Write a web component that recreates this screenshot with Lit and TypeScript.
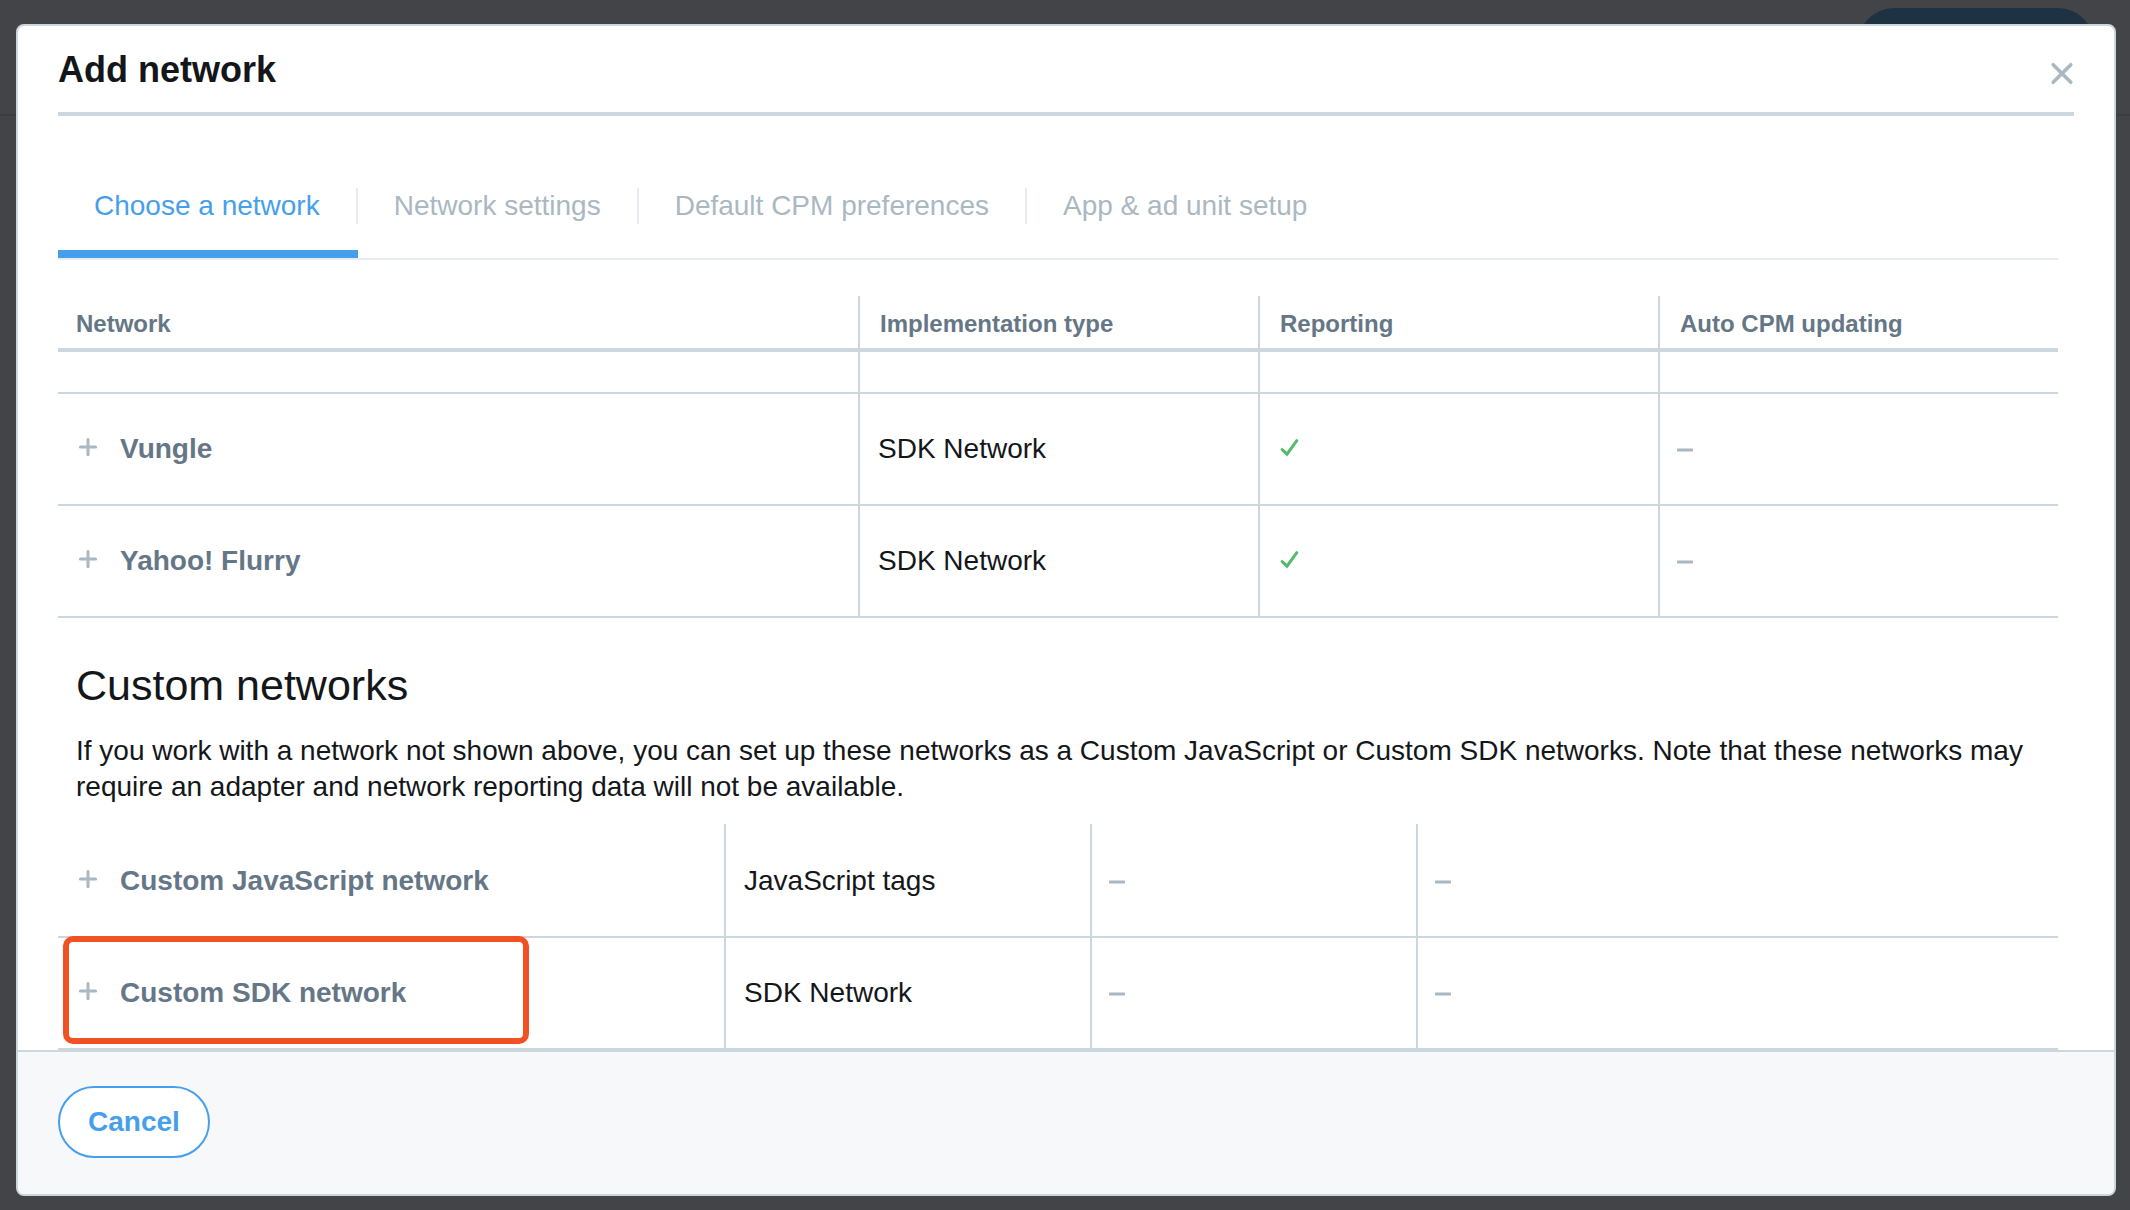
import { LitElement, html, css, nothing } from "lit";
import { customElement, state } from "lit/decorators.js";

interface Network {
  name: string;
  type: string;
  reporting: boolean;
  autoCpm: boolean;
  highlighted?: boolean;
}

const TABS = [
  "Choose a network",
  "Network settings",
  "Default CPM preferences",
  "App & ad unit setup",
];

const COLUMNS = ["Network", "Implementation type", "Reporting", "Auto CPM updating"];

const NETWORKS: Network[] = [
  { name: "Vungle", type: "SDK Network", reporting: true, autoCpm: false },
  { name: "Yahoo! Flurry", type: "SDK Network", reporting: true, autoCpm: false },
];

const CUSTOM_NETWORKS: Network[] = [
  { name: "Custom JavaScript network", type: "JavaScript tags", reporting: false, autoCpm: false },
  { name: "Custom SDK network", type: "SDK Network", reporting: false, autoCpm: false, highlighted: true },
];

const plusIcon = html`<svg class="icon plus" viewBox="0 0 24 24" aria-hidden="true">
  <path d="M12 2.4v15.4M4.4 10.1h15.2" />
</svg>`;

const checkIcon = html`<svg class="icon check" viewBox="0 0 24 24" role="img" aria-label="Yes">
  <path d="M4.2 12.6L9 17.2L18.8 3.6" />
</svg>`;

const dashIcon = html`<svg class="icon dash" viewBox="0 0 24 24" role="img" aria-label="No">
  <rect x="1" y="11" width="16" height="4" rx="1" opacity="0.5" />
  <rect x="1" y="12" width="16" height="2" />
</svg>`;

@customElement("app-root")
export class AppRoot extends LitElement {
  @state() private activeTab = 0;

  static styles = css`
    :host {
      --line: #ccd6dd;
      --faint: #e6ecf0;
      --muted: #aab8c2;
      --slate: #657786;
      --ink: #14171a;
      --blue: #479fec;
      display: block;
      color: var(--ink);
      font-family: "Liberation Sans", Arial, sans-serif;
      font-size: 28px;
      line-height: 36px;
    }
    * {
      box-sizing: border-box;
    }
    button {
      font: inherit;
      cursor: pointer;
    }
    .page {
      position: relative;
      display: flex;
      min-height: 100vh;
      padding: 24px 14px 14px 16px;
      background: #434448;
    }
    .backdrop-bar {
      position: absolute;
      top: 0;
      left: 0;
      right: 0;
      height: 116px;
      border-bottom: 2px solid #3c3d41;
    }
    .backdrop-pill {
      position: absolute;
      top: 8px;
      right: 36px;
      width: 236px;
      height: 72px;
      border-radius: 36px;
      background: #1f3244;
    }
    .modal {
      position: relative;
      flex: 1;
      display: flex;
      flex-direction: column;
      overflow: hidden;
      background: #fff;
      border: 2px solid var(--line);
      border-radius: 8px;
    }
    .header {
      display: flex;
      justify-content: space-between;
      margin: 0 40px;
      padding: 21px 0 19px;
      border-bottom: 4px solid var(--line);
    }
    .title {
      margin: 0;
      font-size: 36px;
      line-height: 46px;
      font-weight: bold;
    }
    .close {
      align-self: flex-end;
      display: flex;
      padding: 0;
      border: 0;
      background: none;
    }
    .close svg {
      width: 24px;
      height: 40px;
      fill: none;
      stroke: var(--muted);
      stroke-width: 3.6;
      stroke-linecap: round;
    }
    .content {
      flex: 1;
      padding: 46px 56px 0 40px;
    }
    .tabs {
      display: flex;
      border-bottom: 2px solid var(--faint);
    }
    .tab {
      display: flex;
      padding: 26px 0;
      border: 0;
      border-bottom: 8px solid transparent;
      background: none;
      color: var(--muted);
    }
    .tab.active {
      color: var(--blue);
      border-bottom-color: var(--blue);
    }
    .tab-label {
      padding: 0 36px;
      border-right: 2px solid var(--faint);
    }
    .tab:last-child .tab-label {
      border-right: 0;
    }
    .table {
      width: 100%;
      border-collapse: separate;
      border-spacing: 0;
      table-layout: fixed;
    }
    .network-table {
      margin-top: 36px;
    }
    .network-table .col-name {
      width: 40%;
    }
    .custom-table .col-name {
      width: 33.3%;
    }
    .custom-table .col-type {
      width: 18.3%;
    }
    .custom-table .col-reporting {
      width: 16.3%;
    }
    th {
      padding: 10px 20px 6px;
      border-bottom: 4px solid var(--line);
      color: var(--slate);
      font-size: 24px;
      text-align: left;
    }
    th:first-child {
      padding-left: 18px;
    }
    td {
      padding: 37px 18px;
      border-bottom: 2px solid var(--line);
    }
    th + th,
    td + td {
      border-left: 2px solid var(--line);
    }
    .custom-table tr:first-child td {
      padding-top: 39px;
    }
    .spacer td {
      height: 42px;
      padding: 0;
    }
    .name-cell {
      position: relative;
    }
    .name {
      display: flex;
      align-items: center;
      gap: 20px;
      padding: 0;
      border: 0;
      background: none;
      color: var(--slate);
      font-weight: bold;
    }
    .status {
      display: flex;
      align-items: center;
      height: 36px;
    }
    .icon {
      display: block;
      flex: none;
      width: 24px;
      height: 24px;
      fill: none;
      stroke-width: 3;
      stroke-linecap: round;
    }
    .plus {
      stroke: var(--muted);
    }
    .check {
      stroke: #55bb6b;
    }
    .dash {
      margin-left: -2px;
      fill: var(--muted);
    }
    .highlight {
      position: absolute;
      top: -2px;
      left: 5px;
      width: 466px;
      height: 108px;
      border: 6px solid #f05223;
      border-radius: 10px;
      pointer-events: none;
    }
    .custom-title {
      margin: 42px 18px 23px;
      font-size: 43px;
      line-height: 50px;
      font-weight: normal;
    }
    .custom-text {
      margin: 0 0 19px;
      padding-left: 18px;
    }
    .footer {
      padding: 34px 40px 36px;
      background: #f6f8fa;
      border-top: 2px solid var(--line);
    }
    .cancel {
      display: block;
      padding: 16px 28px;
      border: 2px solid var(--blue);
      border-radius: 36px;
      background: #fff;
      color: var(--blue);
      font-weight: bold;
    }
  `;

  private renderRow(network: Network) {
    return html`<tr>
      <td class="name-cell">
        <button class="name" type="button">${plusIcon}<span>${network.name}</span></button>
        ${network.highlighted ? html`<div class="highlight"></div>` : nothing}
      </td>
      <td>${network.type}</td>
      <td><div class="status">${network.reporting ? checkIcon : dashIcon}</div></td>
      <td><div class="status">${network.autoCpm ? checkIcon : dashIcon}</div></td>
    </tr>`;
  }

  private renderColumns() {
    return html`<colgroup>
      <col class="col-name" />
      <col class="col-type" />
      <col class="col-reporting" />
      <col class="col-cpm" />
    </colgroup>`;
  }

  render() {
    return html`
      <div class="page">
        <div class="backdrop-bar"></div>
        <div class="backdrop-pill"></div>
        <section class="modal" role="dialog" aria-labelledby="dialog-title">
          <header class="header">
            <h1 class="title" id="dialog-title">Add network</h1>
            <button class="close" type="button" aria-label="Close">
              <svg viewBox="0 0 24 40" aria-hidden="true">
                <path d="M3.2 11.7l17.6 17.6M20.8 11.7L3.2 29.3" />
              </svg>
            </button>
          </header>
          <div class="content">
            <nav class="tabs" role="tablist">
              ${TABS.map(
                (label, index) => html`<button
                  class="tab ${index === this.activeTab ? "active" : ""}"
                  type="button"
                  role="tab"
                  aria-selected=${index === this.activeTab ? "true" : "false"}
                  @click=${() => (this.activeTab = index)}
                >
                  <span class="tab-label">${label}</span>
                </button>`
              )}
            </nav>
            <table class="table network-table">
              ${this.renderColumns()}
              <thead>
                <tr>
                  ${COLUMNS.map((label) => html`<th scope="col">${label}</th>`)}
                </tr>
              </thead>
              <tbody>
                <tr class="spacer" aria-hidden="true">
                  ${COLUMNS.map(() => html`<td></td>`)}
                </tr>
                ${NETWORKS.map((network) => this.renderRow(network))}
              </tbody>
            </table>
            <h2 class="custom-title">Custom networks</h2>
            <p class="custom-text">
              If you work with a network not shown above, you can set up these networks as a Custom
              JavaScript or Custom SDK networks. Note that these networks may require an adapter and
              network reporting data will not be available.
            </p>
            <table class="table custom-table">
              ${this.renderColumns()}
              <tbody>
                ${CUSTOM_NETWORKS.map((network) => this.renderRow(network))}
              </tbody>
            </table>
          </div>
          <footer class="footer">
            <button class="cancel" type="button">Cancel</button>
          </footer>
        </section>
      </div>
    `;
  }
}
